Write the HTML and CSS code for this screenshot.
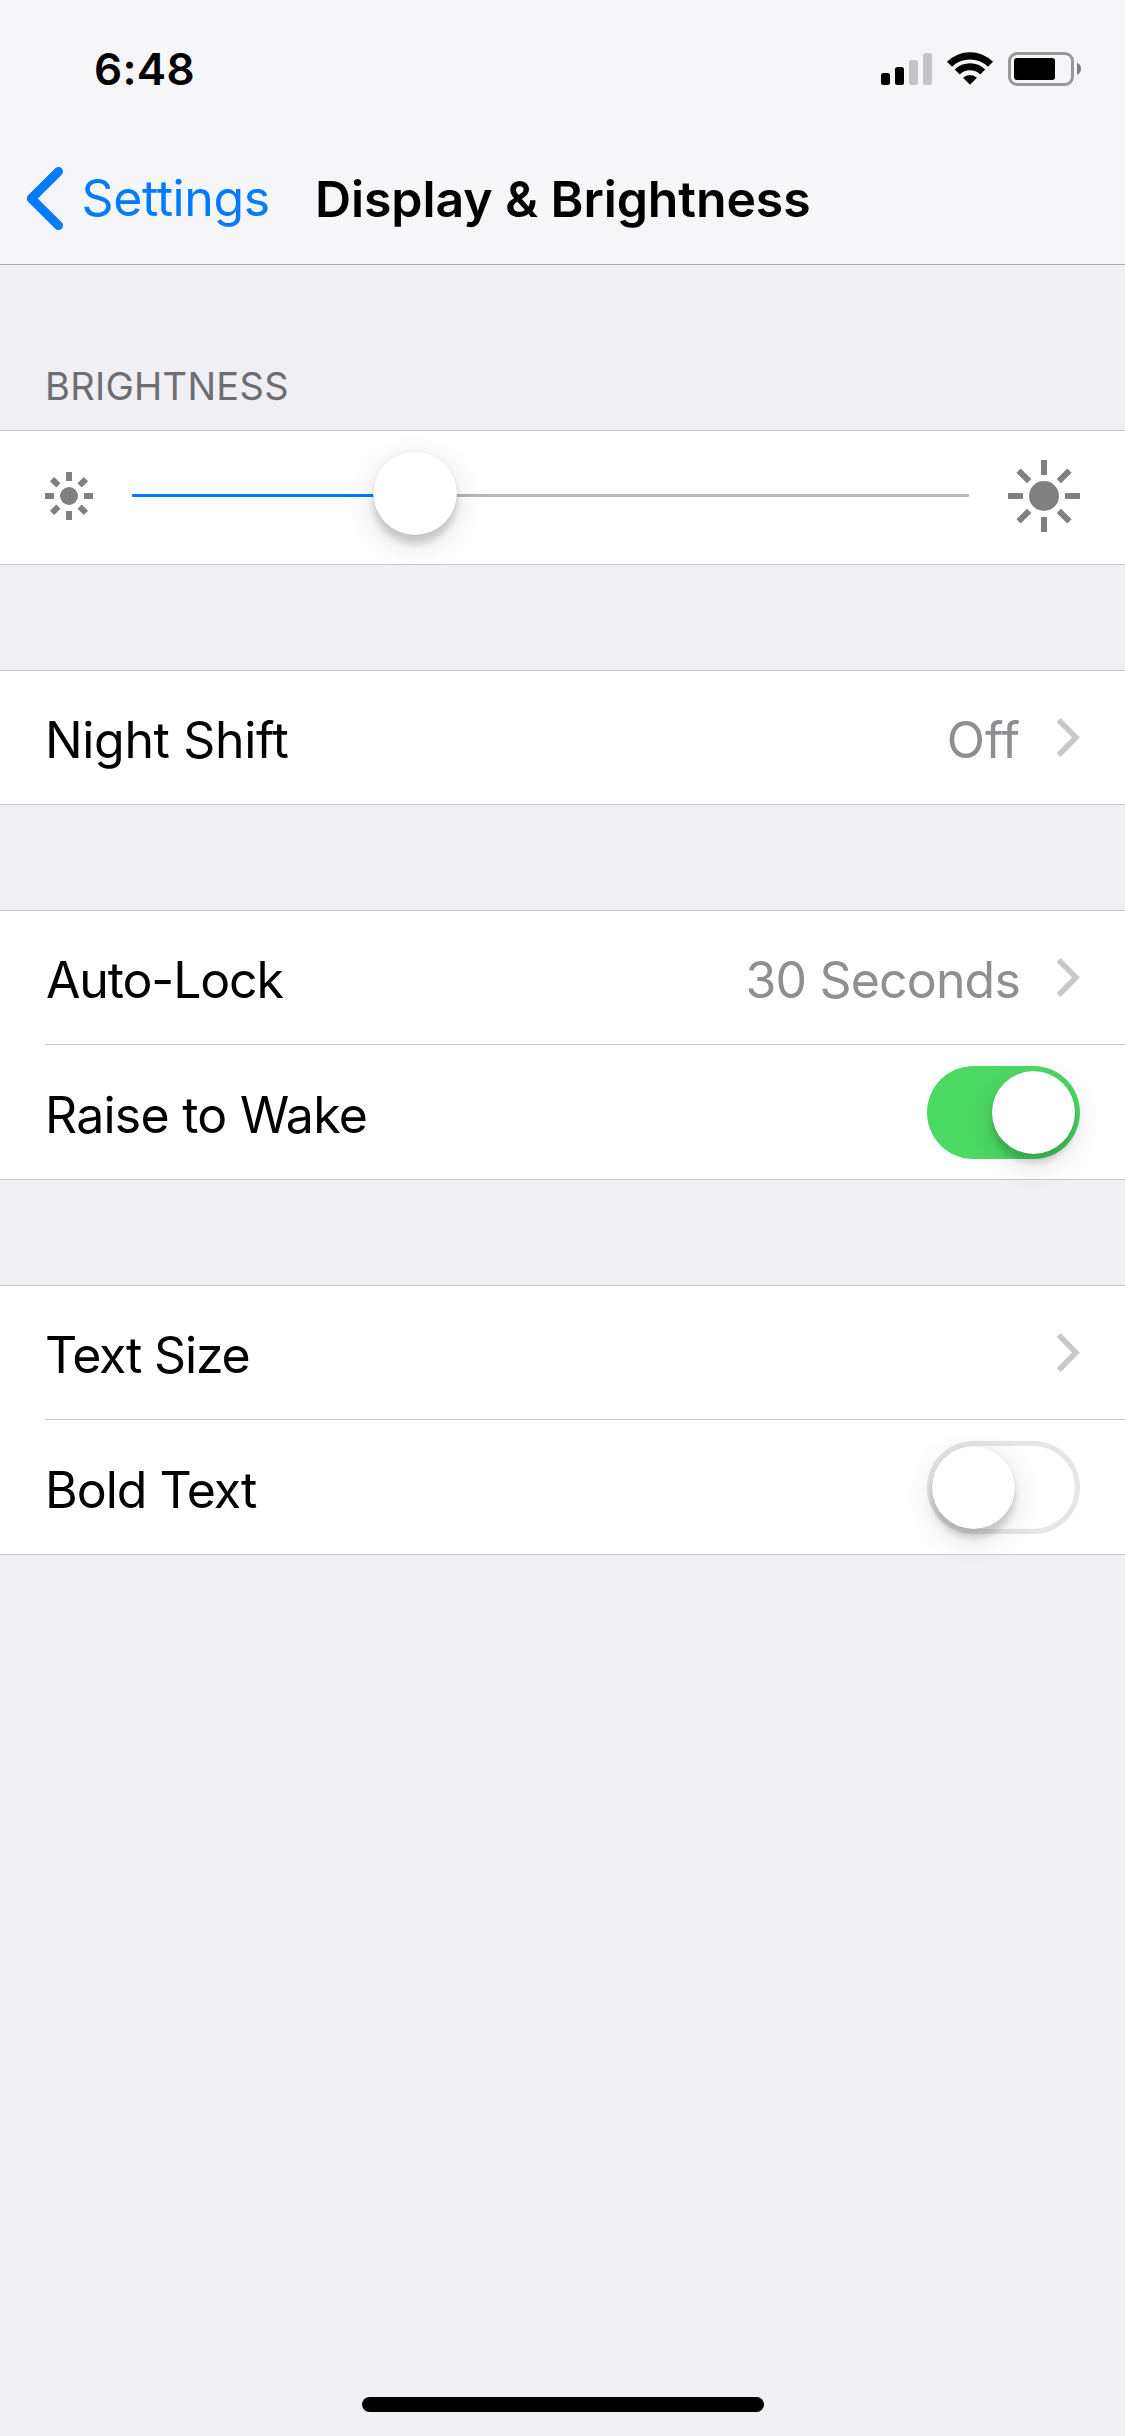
FILE: index.html
```html
<!DOCTYPE html>
<html lang="en">
<head>
<meta charset="utf-8">
<title>Display &amp; Brightness</title>
<link rel="stylesheet" href="styles.css">
</head>
<body>
<div class="screen">
  <header class="header">
    <div class="status">
      <span class="time">6:48</span>
      <svg class="status-icons" width="200" height="34" viewBox="881 52 200 34">
        <rect x="881" y="73" width="9" height="12" rx="2.5"/>
        <rect x="895" y="67" width="9" height="18" rx="2.5"/>
        <g fill="#c4c4c6">
          <rect x="909" y="60" width="9" height="25" rx="2.5"/>
          <rect x="923" y="53" width="9" height="32" rx="2.5"/>
        </g>
        <path d="M947 61.7A32.5 32.5 0 0 1 993 61.7L987.9 66.8A25.3 25.3 0 0 0 952.1 66.8Z"/>
        <path d="M954.8 69.5A21.5 21.5 0 0 1 985.2 69.5L980.2 74.5A14.5 14.5 0 0 0 959.8 74.5Z"/>
        <path d="M963 77.8A10 10 0 0 1 977 77.8L970 84.8Z"/>
        <rect x="1009.5" y="53.5" width="63" height="31" rx="7.5" fill="none" stroke="#98989a" stroke-width="3"/>
        <rect x="1014" y="58" width="41" height="22" rx="3"/>
        <path d="M1077 62.5C1079.600 63.800 1081 66 1081 68.800S1079.600 73.800 1077 75Z" fill="#7d7d7f"/>
      </svg>
    </div>
    <nav class="nav">
      <a class="back">
        <svg class="back-icon" width="38" height="64" viewBox="26 167 38 64"><path d="M58.500 171.500L31.300 198.500L58.500 225.500"/></svg>
        <span class="back-label">Settings</span>
      </a>
      <h1 class="title">Display &amp; Brightness</h1>
    </nav>
  </header>

  <h2 class="section-label">BRIGHTNESS</h2>
  <section class="group">
    <div class="row slider-row">
      <svg class="sun" width="48" height="48" viewBox="-24 -24 48 48">
        <circle r="9"/>
        <path id="small-rays" d="M-3-24h6v9h-6zM-3 15h6v9h-6zM-24-3h9v6h-9zM15-3h9v6h-9z"/>
        <use href="#small-rays" transform="rotate(45)"/>
      </svg>
      <div class="slider"><div class="fill"></div><div class="knob slider-knob"></div></div>
      <svg class="sun" width="72" height="72" viewBox="-36 -36 72 72">
        <circle r="15"/>
        <path id="large-rays" d="M-3-36h6v15h-6zM-3 21h6v15h-6zM-36-3h15v6h-15zM21-3h15v6h-15z"/>
        <use href="#large-rays" transform="rotate(45)"/>
      </svg>
    </div>
  </section>

  <section class="group">
    <div class="row"><span class="label night">Night Shift</span><span class="value">Off</span>
      <svg class="chevron" width="24" height="41" viewBox="0 0 24 41"><path d="M2.600 3L20 20.500L2.600 38"/></svg></div>
  </section>

  <section class="group">
    <div class="row"><span class="label lock">Auto-Lock</span><span class="value seconds">30 Seconds</span>
      <svg class="chevron" width="24" height="41" viewBox="0 0 24 41"><path d="M2.600 3L20 20.500L2.600 38"/></svg></div>
    <div class="divider"></div>
    <div class="row last"><span class="label raise">Raise to Wake</span><div class="toggle on"><div class="knob"></div></div></div>
  </section>

  <section class="group">
    <div class="row"><span class="label size">Text Size</span>
      <svg class="chevron" width="24" height="41" viewBox="0 0 24 41"><path d="M2.600 3L20 20.500L2.600 38"/></svg></div>
    <div class="divider"></div>
    <div class="row last"><span class="label bold">Bold Text</span><div class="toggle"><div class="knob"></div></div></div>
  </section>

  <div class="home"></div>
</div>
</body>
</html>
```
FILE: styles.css
```css
* { box-sizing: border-box; margin: 0; padding: 0; }
body { width: 1125px; background: #efeff4; font-family: Inter, "Liberation Sans", sans-serif; color: #000; }
.screen { display: flex; flex-direction: column; height: 2436px; }
svg { display: block; flex: none; }

/* Status bar and navigation */
.header { height: 265px; background: #f6f6f8; border-bottom: 1px solid #a9a9ad; }
.status { display: flex; justify-content: space-between; align-items: flex-start; height: 132px; padding: 52px 44px 0 94px; }
.time { font-size: 44px; font-weight: 600; line-height: 34px; letter-spacing: .35px; }
.nav { display: flex; align-items: center; height: 132px; padding-left: 26px; }
.back { display: flex; align-items: center; width: 289px; }
.back-icon { margin-top: 2px; }
.back-icon path { fill: none; stroke: #007aff; stroke-width: 9px; stroke-linecap: round; stroke-linejoin: round; }
.back-label { margin-left: 17.5px; color: #007aff; font-size: 50px; line-height: 60px; letter-spacing: -.4px; }
.title { padding-top: 2px; font-size: 50px; font-weight: 600; line-height: 60px; letter-spacing: -.1px; white-space: nowrap; }

/* Grouped table */
.section-label { height: 165px; padding: 97px 0 0 45px; color: #6d6d72; font-size: 38px; font-weight: 400; line-height: 48px; letter-spacing: .3px; }
.group { margin-bottom: 105px; border-top: 1px solid #c8c7cc; border-bottom: 1px solid #c8c7cc; background: #fff; }
.row { display: flex; align-items: center; height: 133px; padding: 0 45px; }
.row.last { height: 134px; }
.divider { height: 1px; margin-left: 45px; background: #c8c7cc; }
.label, .value { padding-top: 5px; font-size: 50px; line-height: 60px; white-space: nowrap; }
.label { margin-right: auto; }
.night { letter-spacing: -.35px; }
.lock { padding-left: 1px; letter-spacing: -1.15px; }
.raise { letter-spacing: -.75px; }
.size { letter-spacing: -1.2px; }
.bold { letter-spacing: -1.02px; }
.value { color: #8e8e93; }
.seconds { letter-spacing: -.82px; }
.chevron { margin-left: 36px; }
.chevron path { fill: none; stroke: #c7c7cc; stroke-width: 5.5px; }

/* Brightness slider */
.slider-row { padding-bottom: 3px; }
.sun { fill: #808080; }
.slider { position: relative; width: 837px; height: 3px; margin: 0 39px 1px; border-radius: 1px; background: linear-gradient(90deg, transparent 283px, #b7b7b7 283px); }
.fill { width: 283px; height: 3px; border-radius: 1px; background: #007aff; }
.knob { width: 83px; height: 83px; border-radius: 50%; background: #fff; box-shadow: 0 9px 6px rgba(0,0,0,.14), 0 9px 30px rgba(0,0,0,.14), 0 0 1px rgba(0,0,0,.2); }
.slider-knob { position: absolute; left: 241px; top: -43px; width: 84px; height: 84px; }

/* Switches */
.toggle { display: flex; width: 153px; height: 93px; padding: 5px; border-radius: 47px; box-shadow: inset 0 0 0 5px #e5e5e5; }
.toggle.on { justify-content: flex-end; background: #4cd964; box-shadow: none; }

.home { width: 402px; height: 15px; margin: auto 361px 24px 362px; border-radius: 8px; background: #000; }
```
